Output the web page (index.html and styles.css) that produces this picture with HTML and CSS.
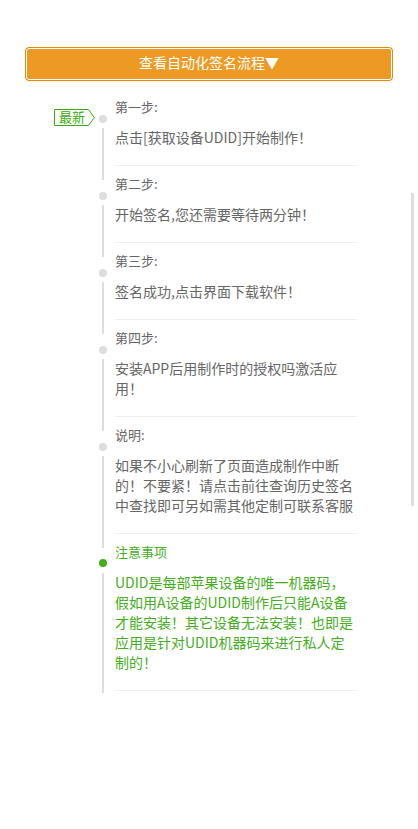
FILE: index.html
```html
<!doctype html>
<html>
<head>
<meta charset="utf-8">
<title>签名流程</title>
<link rel="stylesheet" href="styles.css">
</head>
<body>
<div class="page">
  <button class="flow-btn" type="button">查看自动化签名流程▼</button>
  <ul class="timeline">
    <li class="step">
      <span class="badge">
        <svg class="badge-shape" viewBox="0 0 41 17" width="41" height="17"><polygon points="0.5,0.5 34.5,0.5 40.3,8.5 34.5,16.5 0.5,16.5" fill="#fff" stroke="#3aab0e" stroke-width="1"/></svg>
        <span class="badge-text">最新</span>
      </span>
      <div class="step-title">第一步:</div>
      <div class="step-body">点击[获取设备UDID]开始制作！</div>
    </li>
    <li class="step">
      <div class="step-title">第二步:</div>
      <div class="step-body">开始签名,您还需要等待两分钟！</div>
    </li>
    <li class="step">
      <div class="step-title">第三步:</div>
      <div class="step-body">签名成功,点击界面下载软件！</div>
    </li>
    <li class="step">
      <div class="step-title">第四步:</div>
      <div class="step-body">安装APP后用制作时的授权吗激活应用！</div>
    </li>
    <li class="step">
      <div class="step-title">说明:</div>
      <div class="step-body">如果不小心刷新了页面造成制作中断的！不要紧！请点击前往查询历史签名中查找即可另如需其他定制可联系客服</div>
    </li>
    <li class="step step-note">
      <div class="step-title">注意事项</div>
      <div class="step-body">UDID是每部苹果设备的唯一机器码，假如用A设备的UDID制作后只能A设备才能安装！其它设备无法安装！也即是应用是针对UDID机器码来进行私人定制的！</div>
    </li>
  </ul>
</div>
<div class="scroll-thumb"></div>
</body>
</html>
```

FILE: styles.css
```css
html, body {
  margin: 0;
  padding: 0;
  background: #fff;
}
body {
  font-family: "Noto Sans CJK SC", "Noto Sans", sans-serif;
  color: #666;
  overflow: hidden;
}
.page {
  padding: 47px 25px 0 25px;
}
.flow-btn {
  display: block;
  width: 100%;
  height: 34px;
  margin: 0;
  padding: 0 0 3px 0;
  border: 1px solid #e08f0c;
  border-radius: 4px;
  box-shadow: inset 0 0 0 1px #fff, 0 1px 2px rgba(0,0,0,0.06);
  background: #ec9a23;
  color: #fff;
  font-family: inherit;
  font-size: 14px;
  line-height: 29px;
  text-align: center;
}
.timeline {
  list-style: none;
  margin: 16px 0 0 0;
  padding: 0 36px 0 90px;
}
.step {
  position: relative;
  margin-bottom: 8px;
}
/* line segment below each dot */
.step::before {
  content: "";
  position: absolute;
  left: -13px;
  top: 31px;
  bottom: -14px;
  width: 2px;
  background: #ddd;
}
.step::after {
  content: "";
  position: absolute;
  left: -16px;
  top: 18px;
  width: 8px;
  height: 8px;
  border-radius: 50%;
  background: #ddd;
}
.step-title {
  font-size: 13px;
  line-height: 20px;
}
.step-body {
  margin-top: 10px;
  padding-bottom: 18px;
  font-size: 14px;
  line-height: 20px;
  border-bottom: 1px solid #eee;
}
.step-note { color: #45ae1c; }
.step-note::after { background: #45ae1c; top: 17px; }
.step-note::before { bottom: -2px; }

.badge {
  position: absolute;
  left: -61px;
  top: 12px;
  width: 41px;
  height: 17px;
}
.badge-shape {
  position: absolute;
  left: 0;
  top: 0;
}
.badge-text {
  position: relative;
  display: block;
  padding-left: 5px;
  font-size: 13px;
  line-height: 16px;
  color: #3aab0e;
}
.scroll-thumb {
  position: fixed;
  right: 4px;
  top: 193px;
  width: 3px;
  height: 313px;
  background: #ddd;
}
```
